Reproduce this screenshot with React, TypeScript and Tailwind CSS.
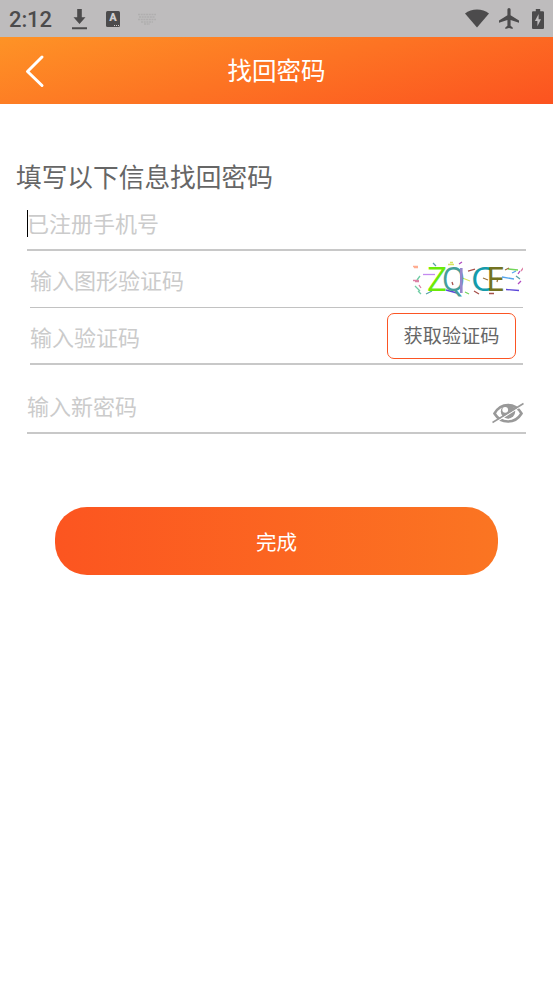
import React, { useState } from 'react';

const StatusBar: React.FC = () => (
  <div className="flex h-[37px] items-center bg-[#bebcbd] pl-[9px] pr-[9px] text-[#4c4b4c]">
    <span className="w-[62px] font-[Roboto] text-[22px] font-medium leading-none tracking-[-0.1px] pt-[2px]">2:12</span>
    <svg width="17" height="22" viewBox="0 0 17 22" fill="currentColor" className="mt-px">
      <path d="M6.2 1h4.6v8.3h3.7L8.5 16 2.5 9.3h3.7zM1 19.2h15V21.2H1z" />
    </svg>
    <div className="relative ml-[18px] flex h-4 w-[14px] items-center justify-center rounded-[1.5px] bg-[#4c4b4c]">
      <span className="font-[Roboto] text-[11px] font-black leading-none text-[#d0cecf] -mt-[2px]">A</span>
      <span className="absolute bottom-[1px] right-[1px] flex gap-px">
        <i className="size-[1px] bg-[#d0cecf]" />
        <i className="size-[1px] bg-[#d0cecf]" />
        <i className="size-[1px] bg-[#d0cecf]" />
      </span>
    </div>
    <svg width="18" height="12" viewBox="0 0 18 12" className="ml-[18px]" stroke="#b0aeaf" strokeWidth="1.6" strokeDasharray="2 .7">
      <path d="M0 1.5h18M1 4h16M0 6.5h18M3 9h12M6 11h6" />
    </svg>
    <div className="ml-auto flex items-center">
      <svg width="24" height="19" viewBox="0 0 24 19" fill="currentColor">
        <path d="M0 4.6C6.4-.8 17.6-.8 24 4.6L12 18.5z" />
      </svg>
      <svg width="20" height="21" viewBox="2 2 19 20" preserveAspectRatio="none" fill="currentColor" className="ml-[10px]">
        <path d="M21 16v-2l-8-5V3.5a1.5 1.5 0 0 0-3 0V9l-8 5v2l8-2.5V19l-2 1.5V22l3.500-1 3.500 1v-1.500L13 19v-5.500z" />
      </svg>
      <svg width="12" height="20" viewBox="0 0 12 20" className="ml-[13px]">
        <path fill="#4c4b4c" d="M1.300 2.200h2.500V0h4.400v2.200h2.500c.7 0 1.300.5 1.300 1.300v15.200c0 .7-.6 1.300-1.300 1.300H1.300C.6 20 0 19.400 0 18.700V3.500c0-.8.6-1.300 1.300-1.300z" />
        <path fill="#bebcbd" d="M6.600 5 2.900 12h2.500v5.200L9 10.200H6.600z" />
      </svg>
    </div>
  </div>
);

const Captcha: React.FC = () => (
  <svg width="112" height="36" viewBox="406 266 112 36" fill="none" strokeWidth="1.300">
    <path stroke="#ffad91" d="M408 271.500h5M409 272.500h4" />
    <path stroke="#dd80a5" d="M408 285.500h6M410 286.500h4M414 290l2 3M519 272l-3 4" />
    <path stroke="#c48af0" d="M418 279.500h12" />
    <path stroke="#71cda5" d="M415 281l-3 4M410 291l5 5M413 296l3 3" />
    <path stroke="#d7e45e" d="M443 269.500h6M445 267.500h3M455 282l10 4" />
    <path stroke="#5ba3a8" d="M431 271l-3-3M421 299l6-3M511 281l4 3" />
    <path stroke="#a6504a" d="M463 276l7-2M474 299l-5-3M447 287l1 3M484 298.500h5" />
    <path stroke="#5c47d8" d="M441 295l11 3M501 294.500l13 1" />
    <path stroke="#55a6ed" d="M497 282l12 2M507 278l4-2" />
    <path stroke="#73d65a" d="M503 274l10 1M460 297l4 2" />
    <path stroke="#9b7138" d="M478 283l5 2M500 275l4-2M493 283l-1 4" />
    <path stroke="#b04ac0" d="M513 279l2-3M513 289l3-3M454 269l3-2" />
    <g className="font-['Open_Sans']" fontSize="32" strokeWidth="0">
      <text x="422" y="296" fill="#6bea08" textLength="20" lengthAdjust="spacingAndGlyphs">Z</text>
      <text x="437" y="296" fill="#459e9b" textLength="23" lengthAdjust="spacingAndGlyphs">Q</text>
      <text x="466" y="296" fill="#159bab" textLength="22" lengthAdjust="spacingAndGlyphs">C</text>
      <text x="481" y="296" fill="#737321" textLength="19" lengthAdjust="spacingAndGlyphs">E</text>
    </g>
    <path stroke="#9686cb" strokeWidth="2.600" d="M456.300 273v25" />
  </svg>
);

const EyeOff: React.FC = () => (
  <svg width="32" height="22" viewBox="0 0 32 22" fill="none">
    <path stroke="#999" strokeWidth="2.600" d="M2.500 11.500C9 .2 23 .2 29.500 11.500 23 22.200 9 22.200 2.500 11.500z" />
    <circle cx="16" cy="9.500" r="7.200" fill="#999" />
    <circle cx="13.200" cy="7.800" r="2.900" fill="#fff" />
    <path stroke="#fff" strokeWidth="1.300" d="M1.500 21.500 31 3" />
    <path stroke="#999" strokeWidth="1.500" d="M.5 20.500 31.500 1.500" />
  </svg>
);

const inputClass = 'h-full min-w-0 flex-1 bg-transparent p-0 text-[22px] text-[#666] placeholder:text-[#cbcbcb] outline-none';

export default function App() {
  const [form, setForm] = useState({ phone: '', captcha: '', code: '', password: '' });
  const [showPassword, setShowPassword] = useState(false);

  const handleChange = (e: React.ChangeEvent<HTMLInputElement>) => {
    const { name, value } = e.target;
    setForm({ ...form, [name]: value });
  };

  return (
    <div className="min-h-[983px] w-full bg-white font-['Noto_Sans_CJK_SC',sans-serif]">
      <StatusBar />
      <header className="grid h-[67px] grid-cols-[60px_1fr_60px] items-center bg-[linear-gradient(166deg,#fe9326_0%,#fc5320_100%)]">
        <button type="button" className="flex pl-[25px]">
          <svg width="20" height="34" viewBox="0 0 20 34" fill="none" stroke="#fff" strokeWidth="3" strokeLinecap="round" strokeLinejoin="round">
            <path d="M17 3 2.500 17.500 17 31.500" />
          </svg>
        </button>
        <h1 className="text-center text-[24.500px] leading-none text-white">找回密码</h1>
      </header>

      <form onSubmit={(e) => e.preventDefault()}>
        <h2 className="mt-[54px] pl-4 text-[25.700px] leading-9 text-[#666]">填写以下信息找回密码</h2>

        <div className="relative mx-[27px] flex h-[57px] border-b-2 border-[#c8c8c8]">
          <input name="phone" value={form.phone} onChange={handleChange} placeholder="已注册手机号" className={inputClass} />
          <span className="absolute left-0 top-[16px] h-[27px] w-px bg-black" />
        </div>
        <div className="mx-[30px] flex h-[57px] items-center border-b border-[#c2c2c2]">
          <input name="captcha" value={form.captcha} onChange={handleChange} placeholder="输入图形验证码" className={inputClass} />
          <Captcha />
        </div>
        <div className="mx-[30px] flex h-[57px] items-center border-b-2 border-[#c8c8c8]">
          <input name="code" value={form.code} onChange={handleChange} placeholder="输入验证码" className={inputClass} />
          <button type="button" className="mr-[7px] h-[46px] w-[129px] rounded-[7px] border-[1.500px] border-[#fb5524] text-[19.200px] text-[#666]">
            获取验证码
          </button>
        </div>
        <div className="mx-[27px] flex h-[69px] items-center border-b-2 border-[#c8c8c8] pt-[13px]">
          <input name="password" type={showPassword ? 'text' : 'password'} value={form.password} onChange={handleChange} placeholder="输入新密码" className={inputClass} />
          <button type="button" onClick={() => setShowPassword(!showPassword)} className="mr-[2px] mt-[16px]">
            <EyeOff />
          </button>
        </div>

        <button type="submit" className="mx-[55px] mt-[73px] block h-[68px] w-[443px] rounded-[32px] bg-[linear-gradient(90deg,#fc5520,#fb7522)] text-[20.500px] text-white">
          完成
        </button>
      </form>
    </div>
  );
}
